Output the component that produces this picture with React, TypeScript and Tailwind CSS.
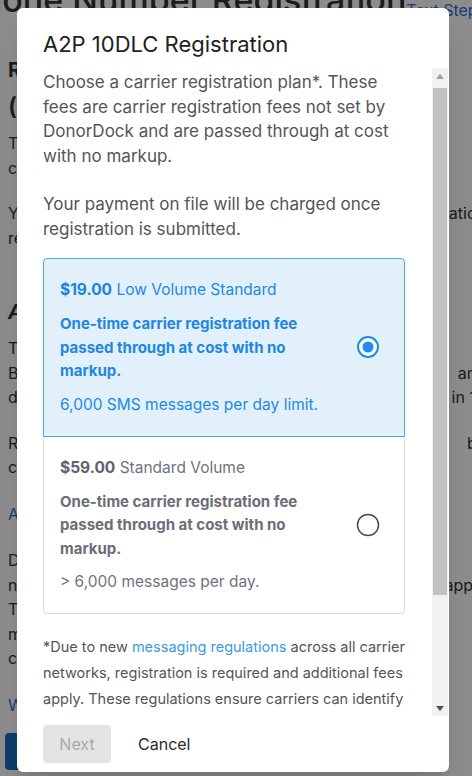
import React, { useState } from "react";

const font = { fontFamily: "Inter, 'Noto Sans', sans-serif" };

interface Plan {
  id: string;
  price: string;
  name: string;
  limit: string;
}

const plans: Plan[] = [
  { id: "low", price: "$19.00", name: "Low Volume Standard", limit: "6,000 SMS messages per day limit." },
  { id: "std", price: "$59.00", name: "Standard Volume", limit: "> 6,000 messages per day." },
];

// background rows: [left text, right text, classes]
const bgRows: { left: string; right?: string; cls: string }[] = [
  { left: "Registration Status", cls: "mt-[36px] text-[20px] leading-[28px] font-bold" },
  { left: "(555) 123-4567", cls: "mt-[10px] text-[24px] leading-[28px] font-semibold" },
  { left: "To send text messages to donors, your number must be", cls: "mt-[9px]" },
  { left: "carrier registered.", cls: "" },
  { left: "Your organization must complete", right: "registration", cls: "mt-[21px]" },
  { left: "registration before sending texts.", cls: "" },
  { left: "A2P 10DLC", cls: "mt-[48px] text-[20px] leading-[28px] font-bold italic" },
  { left: "The Campaign Registry verifies your brand", cls: "mt-[10px]" },
  { left: "Brand registration is reviewed by carriers", right: "and", cls: "" },
  { left: "delivered to your number within", right: "in 10", cls: "" },
  { left: "Registration fees are passed through at", right: "be", cls: "mt-[21px]" },
  { left: "cost with no markup.", cls: "" },
  { left: "A2P 10DLC FAQ", cls: "mt-[22px] text-[#2f6fd0]" },
  { left: "DonorDock will submit your registration", cls: "mt-[22px]" },
  { left: "numbers that are not registered", right: "apply", cls: "" },
  { left: "The registration process can take", cls: "" },
  { left: "messages may be blocked by", cls: "" },
  { left: "carriers.", cls: "" },
  { left: "What is A2P 10DLC?", cls: "mt-[22px] text-[#2f6fd0]" },
];

function Radio({ checked }: { checked: boolean }) {
  return checked ? (
    <svg width="24" height="24" viewBox="0 0 24 24">
      <circle cx="12" cy="12" r="10" fill="#fff" stroke="#1f8ceb" strokeWidth="2" />
      <circle cx="12" cy="12" r="5.5" fill="#1f8ceb" />
    </svg>
  ) : (
    <svg width="24" height="24" viewBox="0 0 24 24">
      <circle cx="12" cy="12" r="10.5" fill="#fff" stroke="#4a4a4a" strokeWidth="1.5" />
    </svg>
  );
}

function PlanCard({ plan, selected, first, onSelect }: { plan: Plan; selected: boolean; first: boolean; onSelect: () => void }) {
  return (
    <div
      onClick={onSelect}
      className={
        "flex items-center pl-[16px] pr-[24px] pt-[20px] pb-[20px] cursor-pointer " +
        (first ? "rounded-t-[4px] " : "rounded-b-[4px] ") +
        (selected ? "bg-[#e2f0fc] border border-[#56a6e8]" : "bg-white border border-[#dcdcdc] border-t-0")
      }
    >
      <div className="flex-1">
        <div className={"text-[15.5px] leading-[22px] " + (selected ? "text-[#2489e0]" : "text-[#6f737d]")}>
          <span className={"font-bold " + (selected ? "text-[#1d84dc]" : "text-[#5f636d]")}>{plan.price}</span> {plan.name}
        </div>
        <div
          className={
            "mt-[11px] max-w-[270px] text-[15px] leading-[23.5px] font-bold " +
            (selected ? "text-[#1f87df]" : "text-[#6a6e77]")
          }
        >
          One-time carrier registration fee passed through at cost with no markup.
        </div>
        <div className={"mt-[11px] text-[15.5px] leading-[22px] " + (selected ? "text-[#2489e0]" : "text-[#6f737d]")}>
          {plan.limit}
        </div>
      </div>
      <Radio checked={selected} />
    </div>
  );
}

export default function App() {
  const [selected, setSelected] = useState("low");

  return (
    <div className="relative w-[472px] h-[776px] overflow-hidden bg-white" style={font}>
      {/* page behind the dialog */}
      <div className="-mt-[20px] pl-[8px] text-[16px] leading-[24.5px] text-[#333]">
        <div className="h-[40px] flex items-start justify-between -ml-[48px] -mr-[11px]">
          <span className="text-[34px] leading-[40px] font-medium whitespace-nowrap">Phone Number Registration</span>
          <span className="mt-[20px] text-[16px] leading-[20px] text-[#2f6fd0] whitespace-nowrap">Text Steps</span>
        </div>
        {bgRows.map((r, i) => (
          <div key={i} className={"flex justify-between whitespace-nowrap -mr-[14px] " + r.cls}>
            <span>{r.left}</span>
            {r.right && <span>{r.right}</span>}
          </div>
        ))}
        <div className="mt-[16px] -ml-[3px] w-[160px] h-[37px] rounded-[4px] bg-[#1a6fc4]" />
      </div>

      {/* overlay */}
      <div className="absolute inset-0 bg-black/45" />

      {/* dialog */}
      <div className="absolute left-[17px] top-[8px] w-[432px] h-[764px] bg-white rounded-[6px] shadow-xl flex flex-col">
        <div className="h-[60px] pl-[26px] flex items-center">
          <h2 className="text-[22px] leading-[28px] text-[#222] pt-[12px]">A2P 10DLC Registration</h2>
        </div>

        <div className="flex h-[648px]">
          <div className="flex-1 overflow-hidden pl-[26px] pr-[27px] pt-[2px]">
            <p className="text-[17px] leading-[24.5px] text-[#555]">
              Choose a carrier registration plan*. These fees are carrier registration fees not set by DonorDock and
              are passed through at cost with no markup.
            </p>
            <p className="mt-[24px] text-[17px] leading-[24.5px] text-[#555]">
              Your payment on file will be charged once registration is submitted.
            </p>

            <div className="mt-[17px]">
              {plans.map((p, i) => (
                <PlanCard key={p.id} plan={p} first={i === 0} selected={selected === p.id} onSelect={() => setSelected(p.id)} />
              ))}
            </div>

            <p className="mt-[20px] text-[14.5px] leading-[26px] text-[#555]">
              *Due to new <span className="text-[#3a9be0]">messaging regulations</span> across all carrier networks,
              registration is required and additional fees apply. These regulations ensure carriers can identify
              who is sending messages and protect recipients from unwanted texts.
            </p>
          </div>

          {/* scrollbar */}
          <div className="w-[16px] mr-[1px] bg-[#f1f1f1] flex flex-col items-center">
            <div className="h-[16px] flex items-center justify-center">
              <svg width="8" height="5" viewBox="0 0 8 5">
                <path d="M0 5 L4 0 L8 5 Z" fill="#a3a3a3" />
              </svg>
            </div>
            <div className="mt-[4px] w-[14px] h-[507px] bg-[#c1c1c1]" />
            <div className="flex-1" />
            <div className="h-[16px] flex items-center justify-center">
              <svg width="8" height="5" viewBox="0 0 8 5">
                <path d="M0 0 L8 0 L4 5 Z" fill="#505050" />
              </svg>
            </div>
          </div>
        </div>

        <div className="flex-1 pl-[26px] flex items-start pt-[9px] gap-[11px]">
          <button className="w-[68px] h-[38px] rounded-[4px] bg-[#e4e4e4] text-[#a9a9a9] text-[16px]" style={font}>
            Next
          </button>
          <button className="h-[38px] px-[16px] text-[16px] text-[#2b2b2b]" style={font}>
            Cancel
          </button>
        </div>
      </div>
    </div>
  );
}
